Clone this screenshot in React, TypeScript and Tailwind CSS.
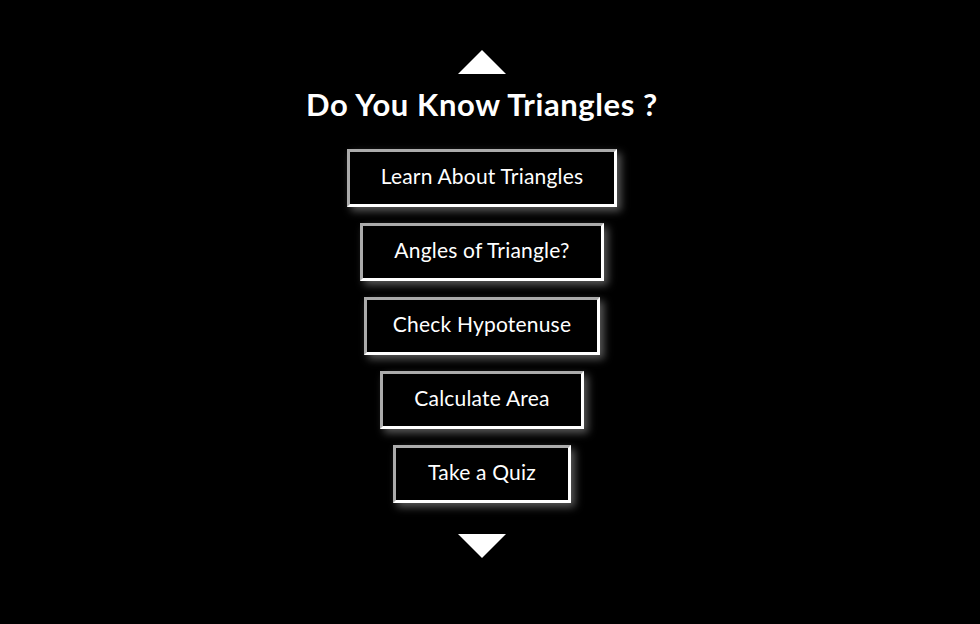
import React from "react";

const items = [
  { label: "Learn About Triangles", w: "w-[270px]" },
  { label: "Angles of Triangle?", w: "w-[244px]" },
  { label: "Check Hypotenuse", w: "w-[236px]" },
  { label: "Calculate Area", w: "w-[204px]" },
  { label: "Take a Quiz", w: "w-[178px]" },
];

export default function App() {
  return (
    <div className="w-[980px] h-[624px] bg-black overflow-hidden" style={{ fontFamily: "Lato, 'Open Sans', sans-serif" }}>
      <div className="w-[964px] flex flex-col items-center pt-[50px]">
        <svg width="48" height="24" viewBox="0 0 48 24">
          <polygon points="24,0 48,24 0,24" fill="#fff" />
        </svg>
        <h1 className="mt-[12px] text-white text-[31px] font-bold leading-[36px] tracking-[0.6px]">
          Do You Know Triangles ?
        </h1>
        <div className="mt-[27px] flex flex-col items-center gap-[16px]">
          {items.map((it) => (
            <button
              key={it.label}
              className={`${it.w} h-[58px] pb-[5px] bg-black text-white text-[21px] tracking-[0.2px] border-[3px] border-white shadow-[4px_4px_8px_rgba(255,255,255,0.35)] flex items-center justify-center whitespace-nowrap`}
              style={{ borderStyle: "inset" }}
            >
              {it.label}
            </button>
          ))}
        </div>
        <svg className="mt-[31px]" width="48" height="24" viewBox="0 0 48 24">
          <polygon points="0,0 48,0 24,24" fill="#fff" />
        </svg>
      </div>
    </div>
  );
}
